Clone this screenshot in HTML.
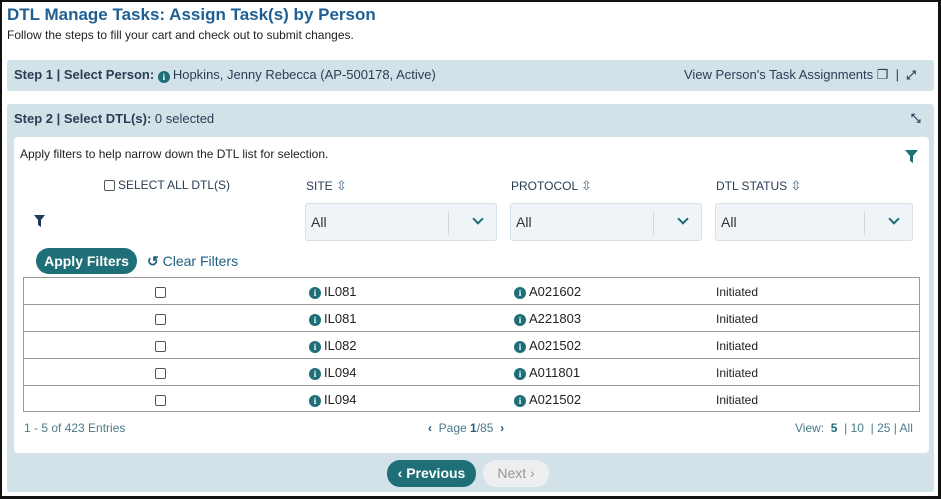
<!DOCTYPE html>
<html><head><style>
*{margin:0;padding:0;box-sizing:border-box}
body{width:941px;height:499px;overflow:hidden;background:#fff;font-family:"Liberation Sans Narrow","Liberation Sans",sans-serif;color:#222;position:relative}
.frame{position:absolute;left:0;top:0;width:941px;height:499px;border:2px solid #111;border-right-width:3px;border-bottom-width:3px}
.a{position:absolute;white-space:nowrap}
.panel{position:absolute;background:#d3e2e9;border-radius:3px}
.info{display:inline-block;width:12px;height:12px;border-radius:50%;background:#1e6f78;color:#fff;font:bold 9px/12px "Liberation Serif",serif;text-align:center;vertical-align:-1px;margin-right:3px}
.sel{position:absolute;top:203px;height:38px;background:#eef4f7;border:1px solid #d6e2e8;border-radius:3px;font-size:14px;color:#333}
.sel span{position:absolute;left:5px;top:10px}
.sel i{position:absolute;right:47px;top:7px;width:1px;height:24px;background:#d0d8dc}
.sel b{position:absolute;right:14px;top:11px;width:8px;height:8px;border-right:2px solid #1e6f78;border-bottom:2px solid #1e6f78;transform:rotate(45deg)}
.row{position:absolute;left:23px;width:897px;height:27px;border-top:1px solid #999;font-size:13px}
.row .info{vertical-align:0}
.cb{position:absolute;width:11px;height:11px;border:1px solid #555;border-radius:2px;background:#fff}
.hd{position:absolute;top:178px;font-size:12px;color:#2a3d55}
</style></head><body>
<div class="frame"></div>
<div class="a" style="left:7px;top:5px;font-size:17px;font-weight:bold;color:#1f5f94">DTL Manage Tasks: Assign Task(s) by Person</div>
<div class="a" style="left:7px;top:28px;font-size:12px">Follow the steps to fill your cart and check out to submit changes.</div>

<div class="panel" style="left:7px;top:60px;width:927px;height:31px"></div>
<div class="a" style="left:14px;top:67px;font-size:13px;color:#2a3d55"><b>Step 1 | Select Person:</b> <span class="info">i</span>Hopkins, Jenny Rebecca (AP-500178, Active)</div>
<div class="a" style="left:684px;top:67px;font-size:13px;color:#2a3d55">View Person's Task Assignments ❐ &nbsp;| &nbsp;<b style="font-size:12px">⤢</b></div>

<div class="panel" style="left:7px;top:104px;width:927px;height:388px"></div>
<div class="a" style="left:14px;top:111px;font-size:13px;color:#2a3d55"><b>Step 2 | Select DTL(s):</b> 0 selected</div>
<div class="a" style="left:911px;top:111px;font-size:12px;font-weight:bold;color:#2a3d55">⤡</div>
<div style="position:absolute;left:14px;top:137px;width:915px;height:316px;background:#fff;border-radius:4px"></div>
<div class="a" style="left:20px;top:147px;font-size:12px">Apply filters to help narrow down the DTL list for selection.</div>
<svg class="a" style="left:905px;top:150px" width="13" height="13" viewBox="0 0 13 13"><path d="M0 0H13L8 6V13L5 11V6Z" fill="#1e6f78"/></svg>

<div class="cb" style="left:104px;top:180px"></div>
<div class="hd" style="left:118px">SELECT ALL DTL(S)</div>
<div class="hd" style="left:306px">SITE <span style="font-size:13px;color:#4a6a88">⇳</span></div>
<div class="hd" style="left:511px">PROTOCOL <span style="font-size:13px;color:#4a6a88">⇳</span></div>
<div class="hd" style="left:716px">DTL STATUS <span style="font-size:13px;color:#4a6a88">⇳</span></div>
<svg class="a" style="left:34px;top:215px" width="11" height="12" viewBox="0 0 11 12"><path d="M0 0H11L7 5V12L4 10V5Z" fill="#1f3b5c"/></svg>
<div class="sel" style="left:305px;width:192px"><span>All</span><i></i><b></b></div>
<div class="sel" style="left:510px;width:192px"><span>All</span><i></i><b></b></div>
<div class="sel" style="left:715px;width:198px"><span>All</span><i></i><b></b></div>

<div class="a" style="left:36px;top:248px;width:101px;height:26px;border-radius:13px;background:#1e6f78;color:#fff;font-size:14px;font-weight:bold;text-align:center;line-height:26px">Apply Filters</div>
<div class="a" style="left:147px;top:253px;font-size:14px;color:#1f5f80"><b>↺</b> Clear Filters</div>

<div class="row" style="top:277px"><div class="cb" style="left:132px;top:9px"></div><div class="a" style="left:286px;top:6px"><span class="info">i</span>IL081</div><div class="a" style="left:491px;top:6px"><span class="info">i</span>A021602</div><div class="a" style="left:693px;top:7px;font-size:12px">Initiated</div></div>
<div class="row" style="top:304px"><div class="cb" style="left:132px;top:9px"></div><div class="a" style="left:286px;top:6px"><span class="info">i</span>IL081</div><div class="a" style="left:491px;top:6px"><span class="info">i</span>A221803</div><div class="a" style="left:693px;top:7px;font-size:12px">Initiated</div></div>
<div class="row" style="top:331px"><div class="cb" style="left:132px;top:9px"></div><div class="a" style="left:286px;top:6px"><span class="info">i</span>IL082</div><div class="a" style="left:491px;top:6px"><span class="info">i</span>A021502</div><div class="a" style="left:693px;top:7px;font-size:12px">Initiated</div></div>
<div class="row" style="top:358px"><div class="cb" style="left:132px;top:9px"></div><div class="a" style="left:286px;top:6px"><span class="info">i</span>IL094</div><div class="a" style="left:491px;top:6px"><span class="info">i</span>A011801</div><div class="a" style="left:693px;top:7px;font-size:12px">Initiated</div></div>
<div class="row" style="top:385px;border-bottom:1px solid #999;height:27px"><div class="cb" style="left:132px;top:9px"></div><div class="a" style="left:286px;top:6px"><span class="info">i</span>IL094</div><div class="a" style="left:491px;top:6px"><span class="info">i</span>A021502</div><div class="a" style="left:693px;top:7px;font-size:12px">Initiated</div></div>
<div style="position:absolute;left:23px;top:277px;width:1px;height:135px;background:#999"></div>
<div style="position:absolute;left:919px;top:277px;width:1px;height:135px;background:#999"></div>

<div class="a" style="left:24px;top:421px;font-size:12px;color:#4a7a8a">1 - 5 of 423 Entries</div>
<div class="a" style="left:428px;top:421px;font-size:12px;color:#4a7a8a"><b style="color:#1f5f80">‹</b>&nbsp; Page <b style="color:#1f5f80">1</b>/85 &nbsp;<b style="color:#1f5f80">›</b></div>
<div class="a" style="left:795px;top:421px;font-size:12px;color:#4a7a8a">View: &nbsp;<b style="color:#1e6f78">5</b> &nbsp;| 10 &nbsp;| 25 | All</div>

<div class="a" style="left:387px;top:460px;width:89px;height:27px;border-radius:13px;background:#1e6f78;color:#fff;font-size:14px;font-weight:bold;text-align:center;line-height:27px">‹ Previous</div>
<div class="a" style="left:483px;top:460px;width:66px;height:27px;border-radius:13px;background:#eceeef;color:#999;font-size:14px;text-align:center;line-height:27px">Next ›</div>
</body></html>
